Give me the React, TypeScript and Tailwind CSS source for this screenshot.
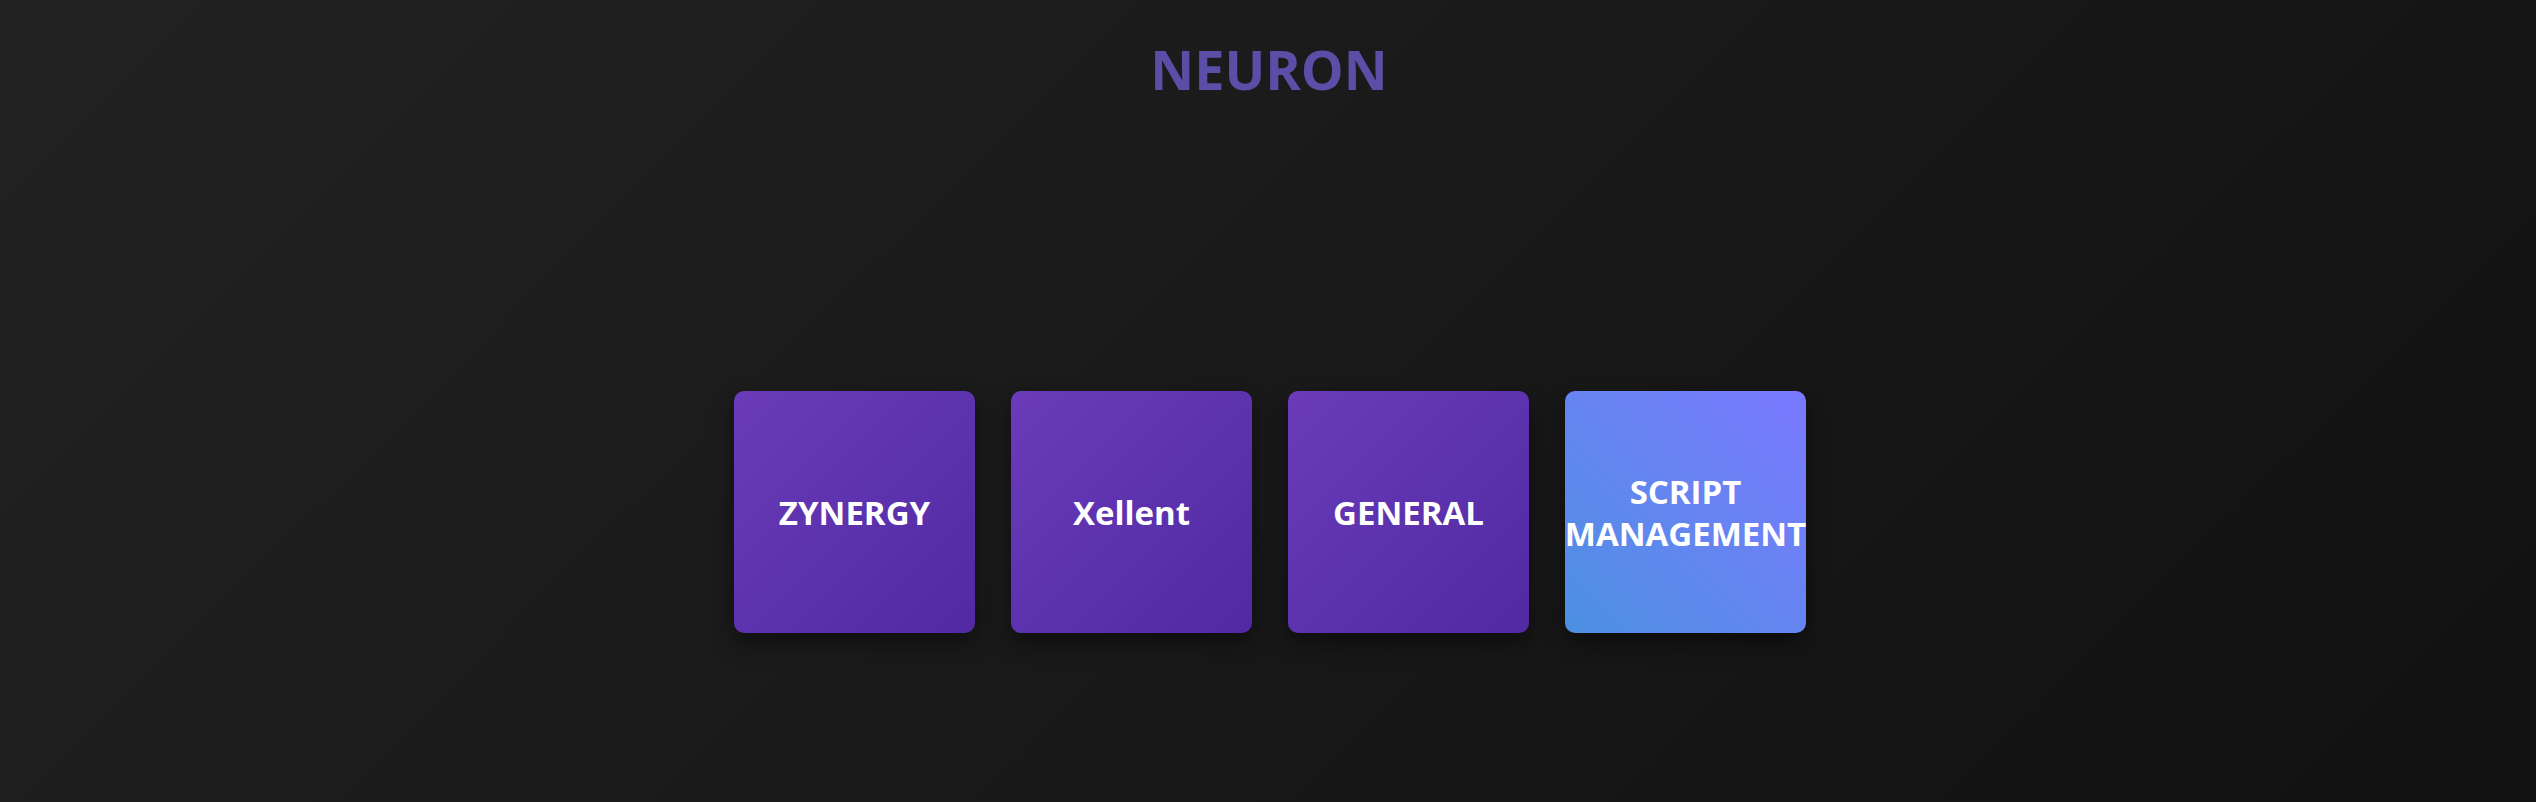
import React from 'react';

const modules = [
	{ name: 'ZYNERGY', variant: 'purple' },
	{ name: 'Xellent', variant: 'purple' },
	{ name: 'GENERAL', variant: 'purple' },
	{ name: 'SCRIPT MANAGEMENT', variant: 'blue' },
];

function ModuleCard({ name, variant }: { name: string; variant: string }) {
	const bg =
		variant === 'blue'
			? 'bg-linear-45 from-[#4a90e2] to-[#7a78ff]'
			: 'bg-linear-135 from-[#6b3bb9] to-[#5029a3]';

	return (
		<div
			className={`flex h-[242px] w-[241px] items-center justify-center rounded-[10px] pt-[2px] text-center shadow-[0_10px_22px_rgba(0,0,0,0.45)] ${bg}`}
		>
			<span className="text-[33px] leading-[1.27] font-bold text-white">{name}</span>
		</div>
	);
}

export default function App() {
	return (
		<div className="flex h-[802px] w-full flex-col items-center bg-linear-135 from-[#222222] to-[#111111] font-['Open_Sans','Noto_Sans',sans-serif]">
			<h1 className="mt-[37px] pl-[2px] text-[54px] leading-[1.2] font-bold text-[#5a4ea6]">NEURON</h1>

			<div className="mt-[289px] flex gap-[36px] pl-[4px]">
				{modules.map((m) => (
					<ModuleCard key={m.name} name={m.name} variant={m.variant} />
				))}
			</div>
		</div>
	);
}
